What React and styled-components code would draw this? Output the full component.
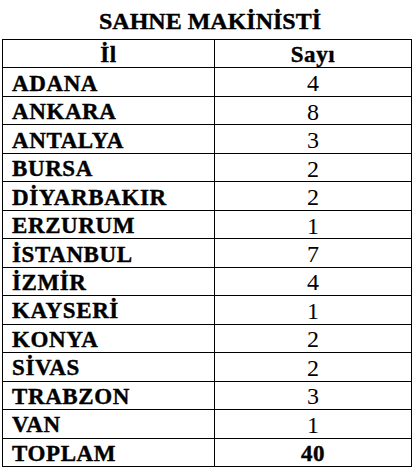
import React from "react";
import styled, { createGlobalStyle } from "styled-components";

const rows = [
  ["ADANA", 4],
  ["ANKARA", 8],
  ["ANTALYA", 3],
  ["BURSA", 2],
  ["DİYARBAKIR", 2],
  ["ERZURUM", 1],
  ["İSTANBUL", 7],
  ["İZMİR", 4],
  ["KAYSERİ", 1],
  ["KONYA", 2],
  ["SİVAS", 2],
  ["TRABZON", 3],
  ["VAN", 1],
];

const GlobalStyle = createGlobalStyle`
  body {
    margin: 0;
    background: #fff;
    font-family: "Liberation Serif", "Times New Roman", serif;
    color: #000;
  }
`;

const Page = styled.div`
  width: 410px;
  padding-left: 2px;
`;

const Title = styled.h1`
  margin: 0;
  height: 39px;
  display: flex;
  align-items: center;
  justify-content: center;
  padding: 3px 0 0 6px;
  box-sizing: border-box;
  font-size: 24px;
  font-weight: 700;
  -webkit-text-stroke: 0.4px #000;
`;

const Table = styled.div`
  display: grid;
  grid-template-columns: 212px 197px;
  grid-auto-rows: 28.47px;
  border-top: 1px solid #000;
  border-left: 1px solid #000;
`;

const Cell = styled.div`
  border-right: 1px solid #000;
  border-bottom: 1px solid #000;
  display: flex;
  align-items: center;
  justify-content: ${(p) => (p.$center ? "center" : "flex-start")};
  padding: 2px 0 0 ${(p) => (p.$center ? "0" : "9px")};
  box-sizing: border-box;
  font-size: ${(p) => (p.$bold ? "23px" : "24px")};
  font-weight: ${(p) => (p.$bold ? 700 : 400)};
  -webkit-text-stroke: ${(p) => (p.$bold ? "0.4px #000" : "0")};
  line-height: 1;
  letter-spacing: ${(p) => (p.$bold ? "0.6px" : "0")};
`;

export default function App() {
  return (
    <Page>
      <GlobalStyle />
      <Title>SAHNE MAKİNİSTİ</Title>
      <Table>
        <Cell $center $bold>İl</Cell>
        <Cell $center $bold>Sayı</Cell>
        {rows.map(([city, n]) => (
          <React.Fragment key={city}>
            <Cell $bold>{city}</Cell>
            <Cell $center>{n}</Cell>
          </React.Fragment>
        ))}
        <Cell $bold>TOPLAM</Cell>
        <Cell $center $bold>40</Cell>
      </Table>
    </Page>
  );
}
